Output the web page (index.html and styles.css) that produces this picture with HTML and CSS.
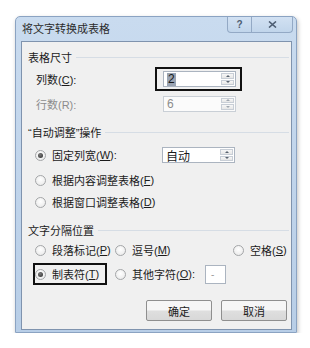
FILE: index.html
```html
<!DOCTYPE html>
<html>
<head>
   <title>将文字转换成表格</title>
   <meta charset="utf-8">
   <link rel="stylesheet" href="styles.css">
</head>
<body>
   <div class="dialog">
      <div class="titlebar">
         <span class="title">将文字转换成表格</span>
         <div class="caption-btns">
            <span class="cap help">?</span>
            <span class="cap close">
               <svg width="9" height="7" viewBox="0 0 9 7"><path d="M1 0.5 L8 6.5 M8 0.5 L1 6.5" stroke="#4d5d72" stroke-width="1.6"/></svg>
            </span>
         </div>
      </div>

      <div class="panel">
         <!-- 表格尺寸 -->
         <div class="group-head first"><span>表格尺寸</span></div>
         <div class="row row-cols">
            <span class="label label-cols">列数(<u>C</u>):</span>
            <div class="mark mark-spin">
               <div class="spin">
                  <span class="val"><span class="sel">2</span></span>
                  <span class="arrows"><span class="up"></span><span class="down"></span></span>
               </div>
            </div>
         </div>
         <div class="row row-rows">
            <span class="label label-rows disabled">行数(R):</span>
            <div class="spin spin-off">
               <span class="val">6</span>
               <span class="arrows"><span class="up"></span><span class="down"></span></span>
            </div>
         </div>

         <!-- 自动调整 -->
         <div class="group-head"><span>“自动调整”操作</span></div>
         <div class="row radio-row ra">
            <span class="opt opt-fixed"><span class="radio on"></span>固定列宽(<u>W</u>):</span>
            <div class="spin">
               <span class="val">自动</span>
               <span class="arrows"><span class="up"></span><span class="down"></span></span>
            </div>
         </div>
         <div class="row radio-row rb">
            <span class="opt"><span class="radio"></span>根据内容调整表格(<u>F</u>)</span>
         </div>
         <div class="row radio-row rc">
            <span class="opt"><span class="radio"></span>根据窗口调整表格(<u>D</u>)</span>
         </div>

         <!-- 文字分隔位置 -->
         <div class="group-head"><span>文字分隔位置</span></div>
         <div class="row sep-row s1">
            <span class="opt col1"><span class="radio"></span>段落标记(<u>P</u>)</span>
            <span class="opt col2"><span class="radio"></span>逗号(<u>M</u>)</span>
            <span class="opt col3"><span class="radio"></span>空格(<u>S</u>)</span>
         </div>
         <div class="row sep-row s2">
            <div class="mark mark-tab">
               <span class="opt"><span class="radio on"></span>制表符(<u>T</u>)</span>
            </div>
            <span class="opt other"><span class="radio"></span>其他字符(<u>O</u>):</span>
            <span class="char-box">-</span>
         </div>

         <div class="buttons">
            <span class="btn">确定</span>
            <span class="btn">取消</span>
         </div>
      </div>
   </div>
</body>
</html>
```

FILE: styles.css
```css
body {
   margin: 0;
   background: #fff;
   font-family: "Liberation Sans", "Noto Sans CJK SC", sans-serif;
   font-size: 11px;
   color: #1b1b1b;
}
u {
   text-decoration: underline;
   text-underline-offset: 1px;
}
.dialog {
   width: 280px;
   height: 315px;
   margin: 16px 0 0 15px;
   border: 1px solid #8ba3c2;
   border-radius: 5px 5px 0 0;
   background: linear-gradient(#c9dbef, #b8cee7);
   box-shadow: 1px 2px 4px rgba(0, 0, 0, 0.25);
}
.titlebar {
   display: flex;
   align-items: flex-start;
   height: 24px;
   padding-left: 6px;
}
.title {
   line-height: 24px;
   font-size: 11px;
   color: #2b2b2b;
}
.caption-btns {
   display: flex;
   margin-left: auto;
   margin-right: 3px;
}
.cap {
   display: flex;
   align-items: center;
   justify-content: center;
   height: 15px;
   border: 1px solid #93a9c5;
   border-top: none;
   background: linear-gradient(#d2e1f2, #c1d5eb);
   color: #4d5d72;
}
.help {
   width: 23px;
   border-radius: 0 0 0 4px;
   font-size: 10px;
   font-weight: bold;
}
.close {
   width: 40px;
   border-left: none;
   border-radius: 0 0 4px 0;
}
.panel {
   height: 287px;
   margin: 0 4px 0 5px;
   border: 1px solid #7f93ae;
   background: #f0f0f0;
}
.group-head {
   display: flex;
   align-items: center;
   height: 16px;
   margin-top: 12px;
   padding-left: 6px;
   padding-right: 2px;
   color: #1b1b1b;
}
.group-head.first {
   margin-top: 7px;
}
.group-head::after {
   content: "";
   flex: 1;
   height: 1px;
   margin-left: 4px;
   background: #d6dde5;
}
.row {
   display: flex;
   align-items: center;
}
.label {
   padding-left: 14px;
}
.disabled {
   color: #8c8c8c;
}
.row-cols {
   height: 24px;
   margin-top: 2px;
}
.label-cols {
   width: 119px;
}
.row-rows {
   height: 17px;
   margin-top: 4px;
}
.label-rows {
   width: 127px;
}
.mark {
   border: 2px solid #111;
}
.mark-spin {
   padding: 2px 4px 2px 6px;
}
.spin {
   display: flex;
   width: 73px;
   height: 16px;
   box-sizing: border-box;
   border: 1px solid #abb4c0;
   background: #fff;
}
.spin .val {
   flex: 1;
   display: flex;
   align-items: center;
   padding-left: 3px;
   font-size: 12px;
}
.sel {
   background: #9aa4b3;
   color: #1a1a1a;
   padding: 0 1px;
   line-height: 13px;
}
.spin-off {
   border-color: #c9cfd6;
   background: #fbfbfb;
}
.spin-off .val {
   color: #8c8c8c;
}
.arrows {
   display: flex;
   flex-direction: column;
   width: 13px;
   margin: 1px 1px 1px 0;
   gap: 1px;
}
.arrows span {
   flex: 1;
   display: flex;
   align-items: center;
   justify-content: center;
   border: 1px solid #c8ced6;
   background: linear-gradient(#f7f7f7, #e6e6e6);
}
.arrows .up::before {
   content: "";
   border-left: 2px solid transparent;
   border-right: 2px solid transparent;
   border-bottom: 2px solid #5a6470;
}
.arrows .down::before {
   content: "";
   border-left: 2px solid transparent;
   border-right: 2px solid transparent;
   border-top: 2px solid #5a6470;
}
.spin-off .arrows .up::before {
   border-bottom-color: #a0a7b0;
}
.spin-off .arrows .down::before {
   border-top-color: #a0a7b0;
}
.opt {
   display: flex;
   align-items: center;
   white-space: nowrap;
}
.radio {
   flex-shrink: 0;
   width: 11px;
   height: 11px;
   box-sizing: border-box;
   margin-right: 6px;
   border: 1px solid #a4a6a8;
   border-radius: 50%;
   background: radial-gradient(circle at 50% 40%, #ffffff, #e6e6e6);
   position: relative;
}
.radio.on::after {
   content: "";
   position: absolute;
   left: 2px;
   top: 2px;
   width: 5px;
   height: 5px;
   border-radius: 50%;
   background: radial-gradient(circle at 40% 35%, #7c7c7c, #2a2a2a);
}
.radio-row {
   height: 16px;
   padding-left: 13px;
}
.ra {
   margin-top: 7px;
}
.rb {
   margin-top: 9px;
}
.rc {
   margin-top: 6px;
}
.opt-fixed {
   width: 127px;
}
.sep-row {
   padding-left: 13px;
}
.s1 {
   height: 16px;
   margin-top: 4px;
}
.s2 {
   height: 22px;
   margin-top: 5px;
   padding-left: 11px;
}
.col1 {
   width: 80px;
}
.col2 {
   width: 118px;
}
.mark-tab {
   display: flex;
   align-items: center;
   width: 70px;
   height: 18px;
   margin-right: 8px;
}
.other {
   width: 90px;
}
.char-box {
   display: flex;
   align-items: center;
   width: 21px;
   height: 19px;
   box-sizing: border-box;
   padding-left: 5px;
   border: 1px solid #abb4c0;
   background: #fff;
   color: #9a9a9a;
   font-size: 10px;
}
.buttons {
   display: flex;
   justify-content: flex-end;
   gap: 9px;
   margin-top: 15px;
   padding-right: 4px;
}
.btn {
   display: flex;
   align-items: center;
   justify-content: center;
   width: 66px;
   height: 21px;
   box-sizing: border-box;
   border: 1px solid #8f8f8f;
   border-radius: 2px;
   background: linear-gradient(#f6f6f6 45%, #dedede 55%, #d8d8d8);
   color: #1b1b1b;
}
```
